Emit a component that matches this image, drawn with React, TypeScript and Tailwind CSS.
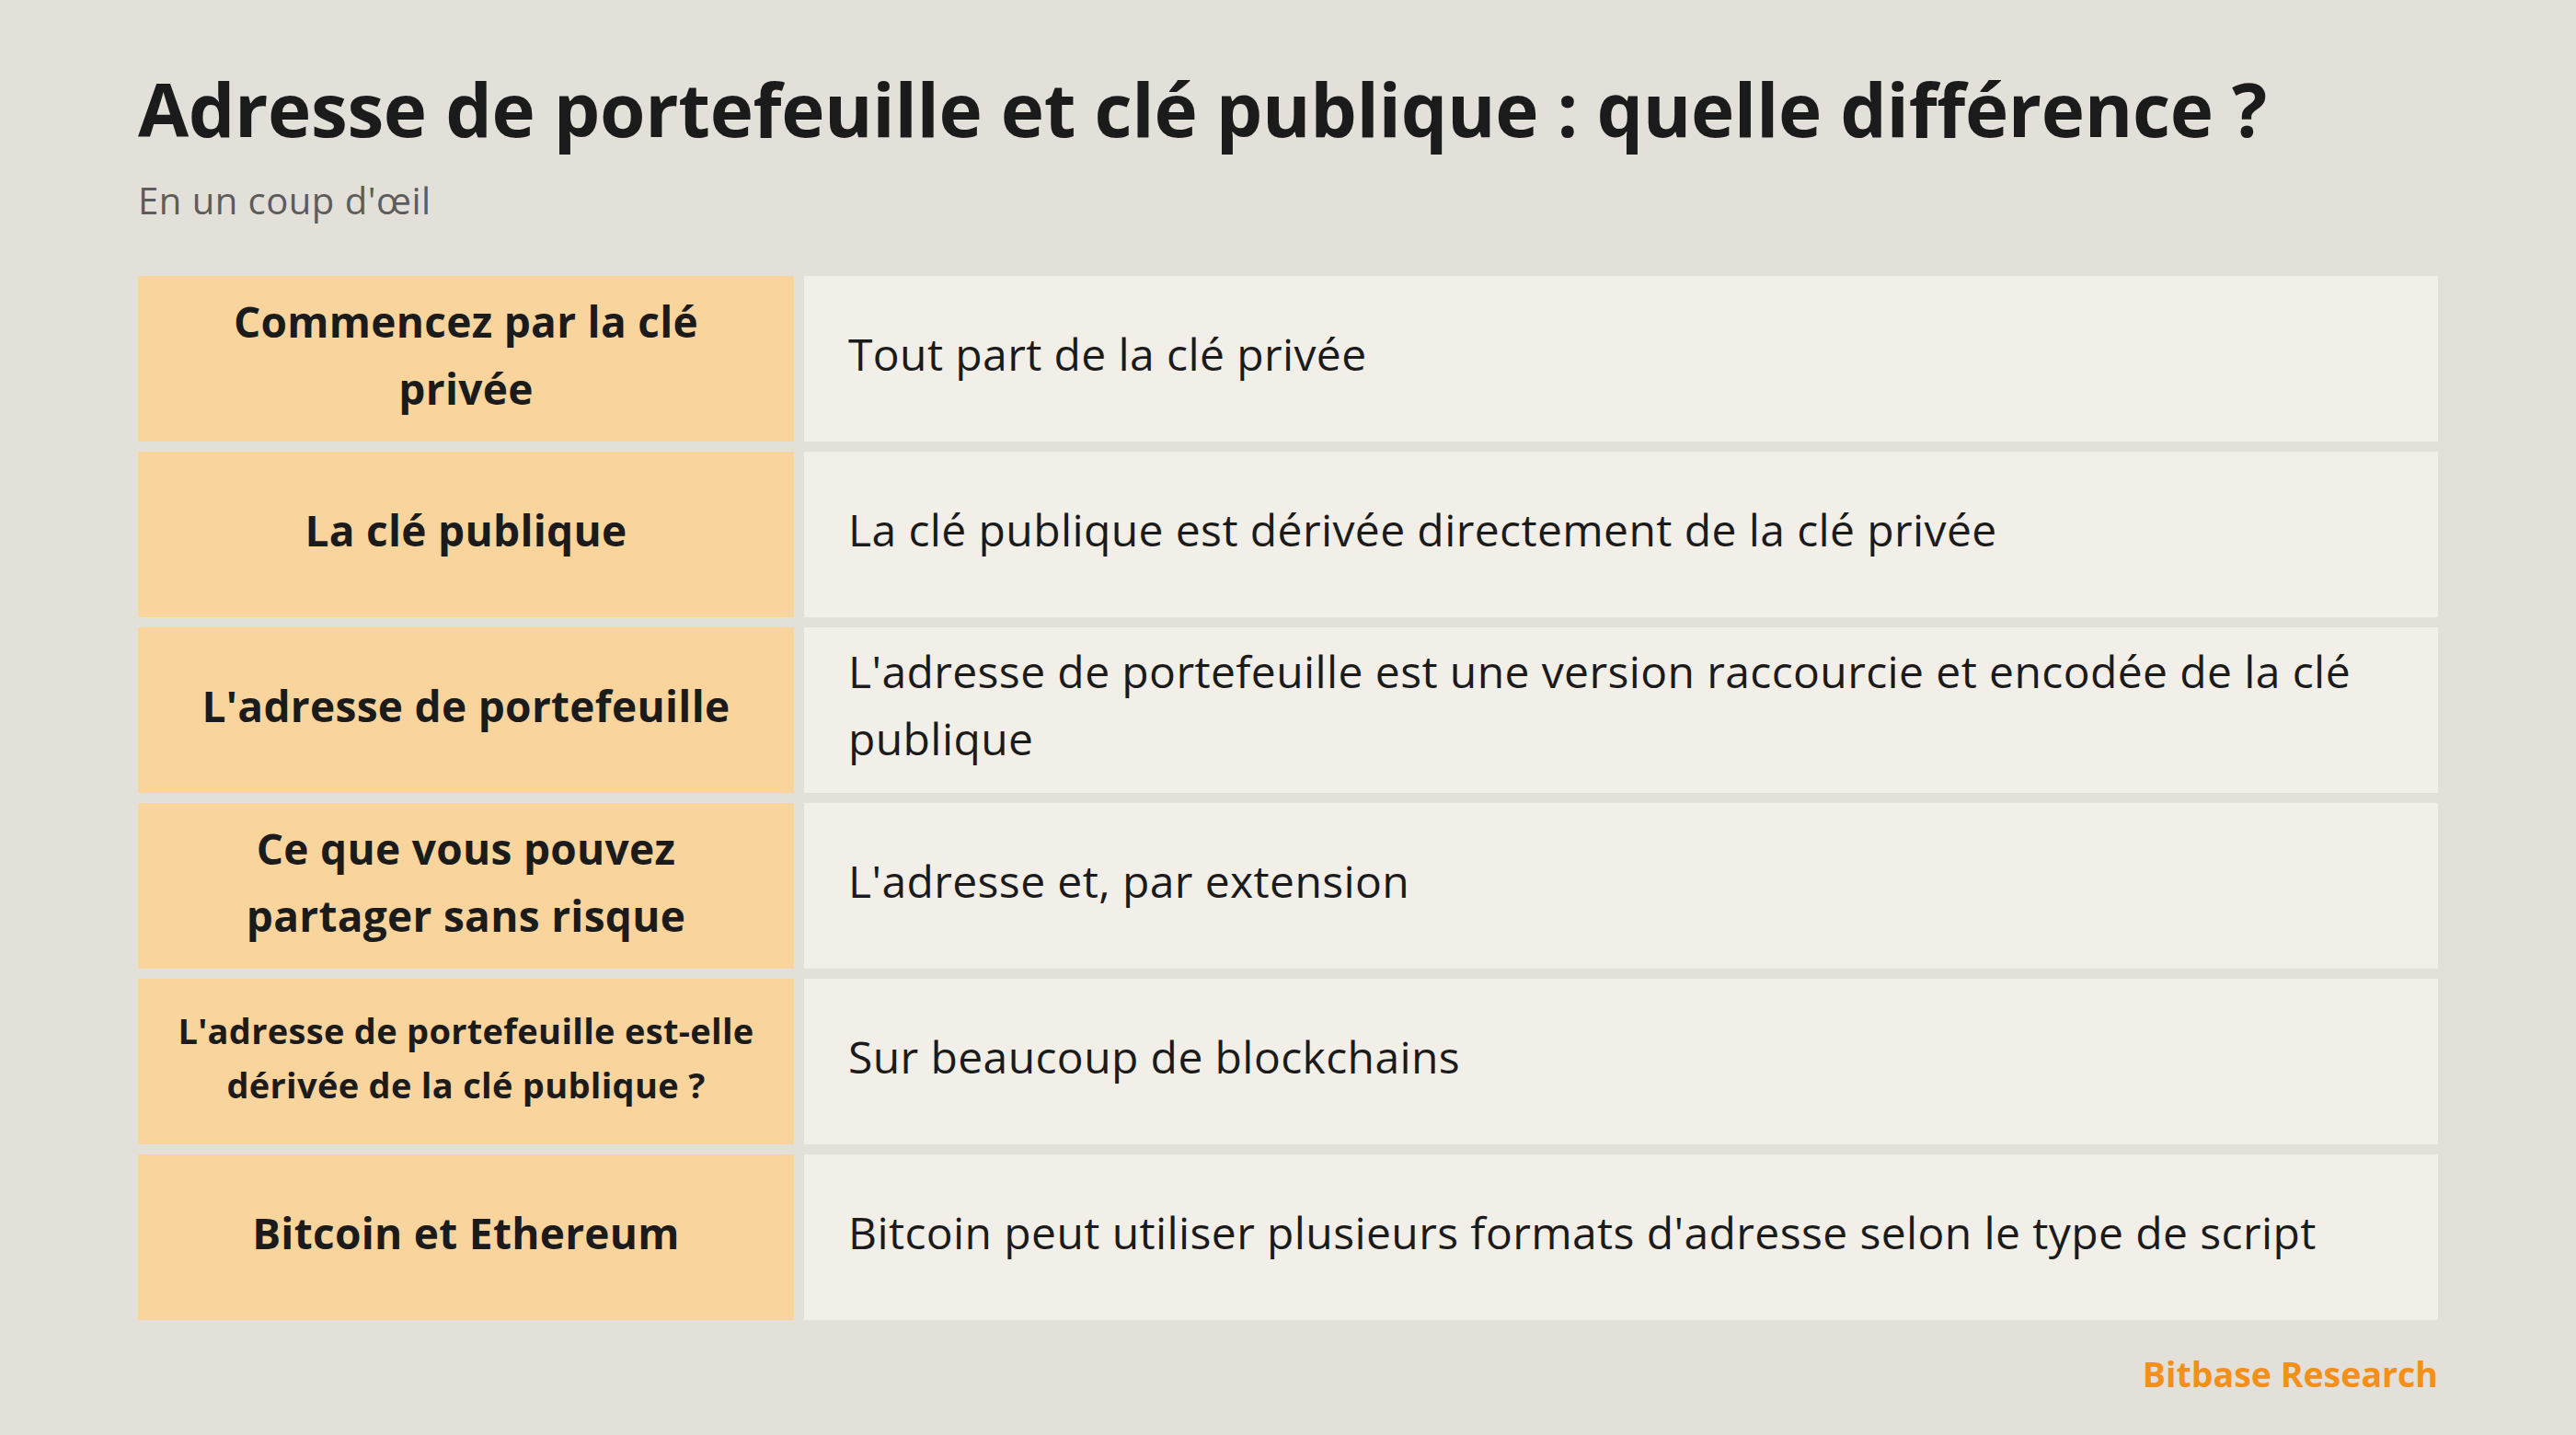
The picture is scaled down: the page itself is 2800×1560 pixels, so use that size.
const rows: { label: string[]; small?: boolean; text: string }[] = [
  { label: ["Commencez par la clé", "privée"], text: "Tout part de la clé privée" },
  { label: ["La clé publique"], text: "La clé publique est dérivée directement de la clé privée" },
  {
    label: ["L'adresse de portefeuille"],
    text: "L'adresse de portefeuille est une version raccourcie et encodée de la clé publique",
  },
  { label: ["Ce que vous pouvez", "partager sans risque"], text: "L'adresse et, par extension" },
  {
    label: ["L'adresse de portefeuille est-elle", "dérivée de la clé publique ?"],
    small: true,
    text: "Sur beaucoup de blockchains",
  },
  {
    label: ["Bitcoin et Ethereum"],
    text: "Bitcoin peut utiliser plusieurs formats d'adresse selon le type de script",
  },
];

export default function App() {
  return (
    <div className="min-h-[1560px] w-[2800px] bg-[#e3dfd9] px-[150px] pt-[78px] font-['Open_Sans',sans-serif] text-[#1b1b1b]">
      <h1 className="text-[80px] font-bold leading-[80px] tracking-[-0.35px]">
        Adresse de portefeuille et clé publique : quelle différence ?
      </h1>
      <p className="mt-[36px] text-[40px] leading-[48px] tracking-[0.5px] text-[#5c5c5c]">En un coup d'œil</p>

      <div className="mt-[58px] flex flex-col gap-[11.5px]">
        {rows.map((row, i) => (
          <div key={i} className="flex h-[179.5px] gap-[11px]">
            <div className="flex w-[713px] shrink-0 flex-col items-center justify-center bg-[#f9d49c] px-[30px] pb-[8px] text-center font-bold">
              {row.label.map((line, j) => (
                <span
                  key={j}
                  className={
                    row.small
                      ? "text-[38px] leading-[59px] tracking-[0.3px]"
                      : "text-[46px] leading-[73px] tracking-[0.3px]"
                  }
                >
                  {line}
                </span>
              ))}
            </div>
            <div className="flex flex-1 items-center bg-[#f2efe8] pb-[11px] pl-[48px] pr-[40px] text-[48px] leading-[73px] tracking-[0.4px]">
              <p className="max-w-[1670px]">{row.text}</p>
            </div>
          </div>
        ))}
      </div>

      <div className="mt-[35px] text-right text-[37.5px] font-bold leading-[48px] text-[#f39019]">
        Bitbase Research
      </div>
    </div>
  );
}
